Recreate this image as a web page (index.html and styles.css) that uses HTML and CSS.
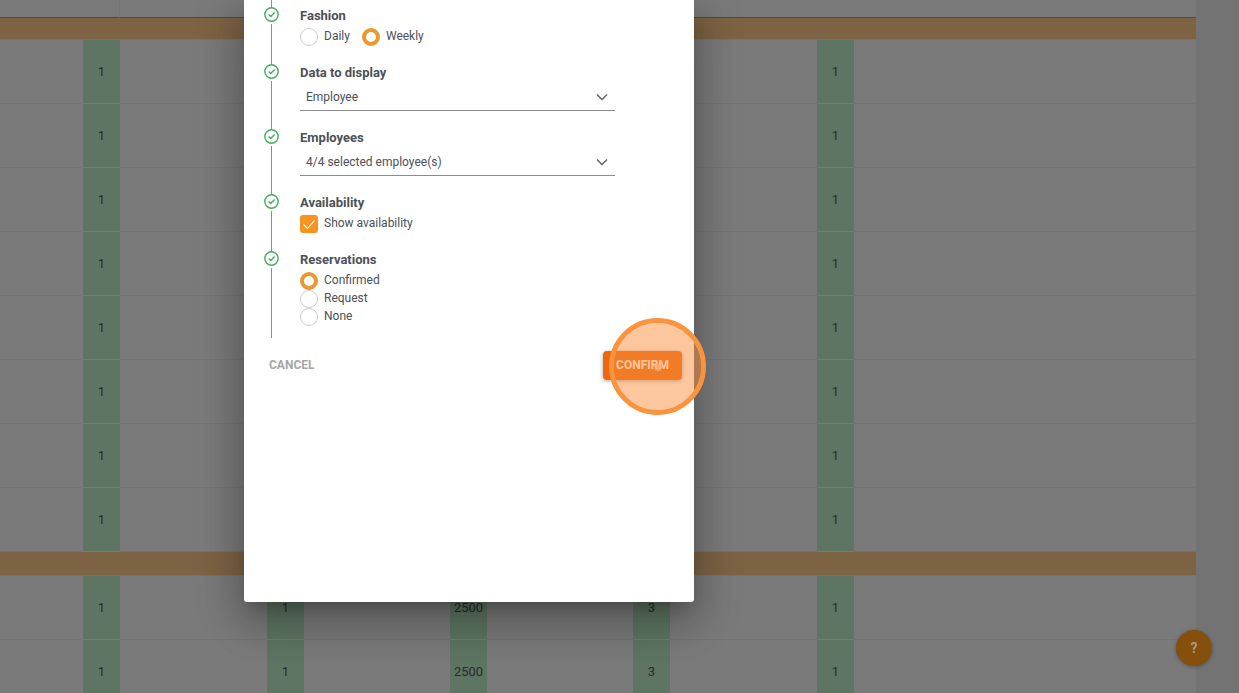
FILE: index.html
```
<!DOCTYPE html>
<html lang="en">
<head>
<meta charset="utf-8">
<title>Schedule display</title>
<link rel="stylesheet" href="styles.css">
</head>
<body>
<svg class="symbols" aria-hidden="true">
  <symbol id="done" viewBox="0 0 15 15"><circle cx="7.500" cy="7.500" r="6.700"/><path d="M4.600 7.600l2.100 2 3.900-4"/></symbol>
  <symbol id="chevron" viewBox="0 0 12 8"><path d="M1 1.500l5 5 5-5"/></symbol>
</svg>
<main class="board">
  <table class="grid">
    <colgroup><col class="gap-first"><col class="slot"><col class="gap"><col class="slot"><col class="gap narrow"><col class="slot"><col class="gap narrow"><col class="slot"><col class="gap"><col class="slot"><col></colgroup>
    <thead><tr class="head"><td colspan="2"></td><td colspan="9"></td></tr></thead>
    <tbody>
      <tr class="band first"><td colspan="11"></td></tr>
      <tr><td></td><td class="on">1</td><td></td><td class="on">1</td><td></td><td class="on">2500</td><td></td><td class="on">3</td><td></td><td class="on">1</td><td></td></tr>
      <tr><td></td><td class="on">1</td><td></td><td class="on">1</td><td></td><td class="on">2500</td><td></td><td class="on">3</td><td></td><td class="on">1</td><td></td></tr>
      <tr><td></td><td class="on">1</td><td></td><td class="on">1</td><td></td><td class="on">2500</td><td></td><td class="on">3</td><td></td><td class="on">1</td><td></td></tr>
      <tr><td></td><td class="on">1</td><td></td><td class="on">1</td><td></td><td class="on">2500</td><td></td><td class="on">3</td><td></td><td class="on">1</td><td></td></tr>
      <tr><td></td><td class="on">1</td><td></td><td class="on">1</td><td></td><td class="on">2500</td><td></td><td class="on">3</td><td></td><td class="on">1</td><td></td></tr>
      <tr><td></td><td class="on">1</td><td></td><td class="on">1</td><td></td><td class="on">2500</td><td></td><td class="on">3</td><td></td><td class="on">1</td><td></td></tr>
      <tr><td></td><td class="on">1</td><td></td><td class="on">1</td><td></td><td class="on">2500</td><td></td><td class="on">3</td><td></td><td class="on">1</td><td></td></tr>
      <tr><td></td><td class="on">1</td><td></td><td class="on">1</td><td></td><td class="on">2500</td><td></td><td class="on">3</td><td></td><td class="on">1</td><td></td></tr>
      <tr class="band"><td colspan="11"></td></tr>
      <tr><td></td><td class="on">1</td><td></td><td class="on">1</td><td></td><td class="on">2500</td><td></td><td class="on">3</td><td></td><td class="on">1</td><td></td></tr>
      <tr><td></td><td class="on">1</td><td></td><td class="on">1</td><td></td><td class="on">2500</td><td></td><td class="on">3</td><td></td><td class="on">1</td><td></td></tr>
    </tbody>
  </table>
</main>
<button class="help" type="button" aria-label="Help">?</button>

<form class="dialog" role="dialog" aria-label="Display options">
  <div class="lead"></div>
  <ol class="steps">
    <li class="step">
      <div class="marker"><svg class="done"><use href="#done"/></svg></div>
      <div class="field" role="group" aria-labelledby="t-fashion">
        <h2 class="title" id="t-fashion">Fashion</h2>
        <div class="choices inline">
          <label class="choice"><input class="radio" type="radio" name="fashion">Daily</label>
          <label class="choice"><input class="radio" type="radio" name="fashion" checked>Weekly</label>
        </div>
      </div>
    </li>
    <li class="step">
      <div class="marker"><svg class="done"><use href="#done"/></svg></div>
      <div class="field">
        <label class="title" for="data">Data to display</label>
        <div class="picker"><select id="data" class="select"><option>Employee</option></select><svg class="chevron"><use href="#chevron"/></svg></div>
      </div>
    </li>
    <li class="step">
      <div class="marker"><svg class="done"><use href="#done"/></svg></div>
      <div class="field">
        <label class="title" for="employees">Employees</label>
        <div class="picker"><select id="employees" class="select"><option>4/4 selected employee(s)</option></select><svg class="chevron"><use href="#chevron"/></svg></div>
      </div>
    </li>
    <li class="step">
      <div class="marker"><svg class="done"><use href="#done"/></svg></div>
      <div class="field" role="group" aria-labelledby="t-avail">
        <h2 class="title" id="t-avail">Availability</h2>
        <label class="choice"><span class="tick"><input class="check" type="checkbox" checked><svg class="tick-mark" viewBox="0 0 18 18"><path d="M3.500 9.500l4 4L14.500 5.500"/></svg></span>Show availability</label>
      </div>
    </li>
    <li class="step">
      <div class="marker"><svg class="done"><use href="#done"/></svg></div>
      <div class="field last" role="group" aria-labelledby="t-res">
        <h2 class="title" id="t-res">Reservations</h2>
        <div class="choices">
          <label class="choice"><input class="radio" type="radio" name="res" checked>Confirmed</label>
          <label class="choice"><input class="radio" type="radio" name="res">Request</label>
          <label class="choice"><input class="radio" type="radio" name="res">None</label>
        </div>
      </div>
    </li>
  </ol>
  <div class="actions">
    <button class="cancel" type="button">CANCEL</button>
    <div class="confirm-wrap"><button class="confirm" type="button">CONFIRM</button><span class="ring"></span></div>
  </div>
</form>
</body>
</html>
```
FILE: styles.css
```
* { box-sizing: border-box; }
body {
  margin: 0;
  height: 100vh;
  overflow: hidden;
  background: #737373;
  color: #4c5058;
  font: 12px/18px Roboto, "Liberation Sans", sans-serif;
}
.symbols { position: absolute; width: 0; height: 0; }

.board { padding-right: 43px; }
.grid {
  width: 100%;
  table-layout: fixed;
  border-spacing: 0;
  background: #7a7a7a;
  color: #2a2a2a;
  font-size: 13px;
  text-align: center;
}
.gap-first { width: 83px; }
.slot { width: 37px; }
.gap { width: 147px; }
.gap.narrow { width: 146px; }
.grid td { height: 64px; padding: 0; border-bottom: 1px solid #747474; }
.grid .on { background: #5d7562; border-bottom-color: #6b8270; }
.grid .head td { height: 18px; border-bottom-color: #53493c; }
.grid .head td:first-child { border-right: 1px solid #747474; }
.grid .band td { height: 24px; background: #7c6344; border-bottom-color: #7a7468; }
.grid .band.first td { height: 22px; }

.help {
  position: fixed;
  right: 27px;
  bottom: 27px;
  width: 36px;
  height: 36px;
  padding: 0;
  border: 0;
  border-radius: 50%;
  background: #85500c;
  color: #b59a78;
  font: 700 14px/36px Roboto, sans-serif;
  box-shadow: 0 1px 4px rgba(0, 0, 0, .3);
}

.dialog {
  position: absolute;
  top: 0;
  left: 244px;
  width: 450px;
  padding-bottom: 222px;
  border-radius: 0 0 3px 3px;
  background: #fff;
  box-shadow: 0 11px 15px -7px rgba(0, 0, 0, .2), 0 24px 38px 3px rgba(0, 0, 0, .14), 0 9px 46px 8px rgba(0, 0, 0, .16);
}
.lead { width: 1px; height: 7px; margin-left: 27px; background: #8c8c8c; }
.steps { margin: 0; padding: 0 79px 0 20px; list-style: none; }
.step { display: grid; grid-template-columns: 15px 1fr; column-gap: 21px; }
.marker { display: flex; flex-direction: column; align-items: center; gap: 2px; }
.marker::after { content: ""; flex: 1; width: 1px; background: #8c8c8c; }
.done { display: block; width: 15px; height: 15px; fill: none; stroke: #43ae5b; stroke-width: 1.400; }
.field { display: flex; flex-direction: column; gap: 4px; padding-bottom: 18px; }
.field.last { padding-bottom: 12px; }
.title { margin: 0; font-size: 13px; font-weight: 700; line-height: 17px; }
.choices { display: flex; flex-direction: column; }
.choices.inline { flex-direction: row; gap: 12px; }
.choice { display: flex; align-items: flex-start; gap: 6px; height: 18px; line-height: 17px; }
.radio, .check { appearance: none; width: 18px; height: 18px; margin: 0; flex: none; }
.radio { border: 1px solid #ccc; border-radius: 50%; background: #fff; }
.radio:checked { border: 4px solid #ec9730; }
.tick { display: grid; }
.tick > * { grid-area: 1 / 1; }
.check { border-radius: 3px; background: #f7941e; }
.tick-mark { width: 18px; height: 18px; fill: none; stroke: #fff; stroke-width: 1.100; pointer-events: none; }
.picker { display: grid; align-items: center; }
.picker > * { grid-area: 1 / 1; }
.select {
  appearance: none;
  width: 100%;
  height: 26px;
  padding: 0 30px 2px 6px;
  border: 0;
  border-bottom: 1px solid #8c8c8c;
  border-radius: 0;
  background: transparent;
  color: inherit;
  font: inherit;
}
.chevron { justify-self: end; width: 12px; height: 8px; margin: 0 7px 2px 0; fill: none; stroke: #5c5f66; stroke-width: 1.400; pointer-events: none; }

.actions { display: flex; justify-content: space-between; padding: 13px 12px 0 19px; }
.cancel, .confirm { height: 29px; border: 0; border-radius: 4px; font: 700 12px/29px Roboto, sans-serif; }
.cancel { padding: 0 6px; background: none; color: #a6a6a6; }
.confirm-wrap { position: relative; display: grid; width: 79px; }
.confirm { padding: 0; background: #ef670d; color: #fff; box-shadow: 0 1px 4px rgba(0, 0, 0, .35); }
.ring {
  position: absolute;
  top: -33px;
  right: -24px;
  display: grid;
  place-items: center;
  width: 97px;
  height: 97px;
  border: 5px solid #f9943d;
  border-radius: 50%;
  background: rgba(249, 144, 64, .5);
  background-clip: padding-box;
}
.ring::after { content: ""; width: 8px; height: 8px; border-radius: 50%; background: rgba(252, 178, 118, .7); }
```
